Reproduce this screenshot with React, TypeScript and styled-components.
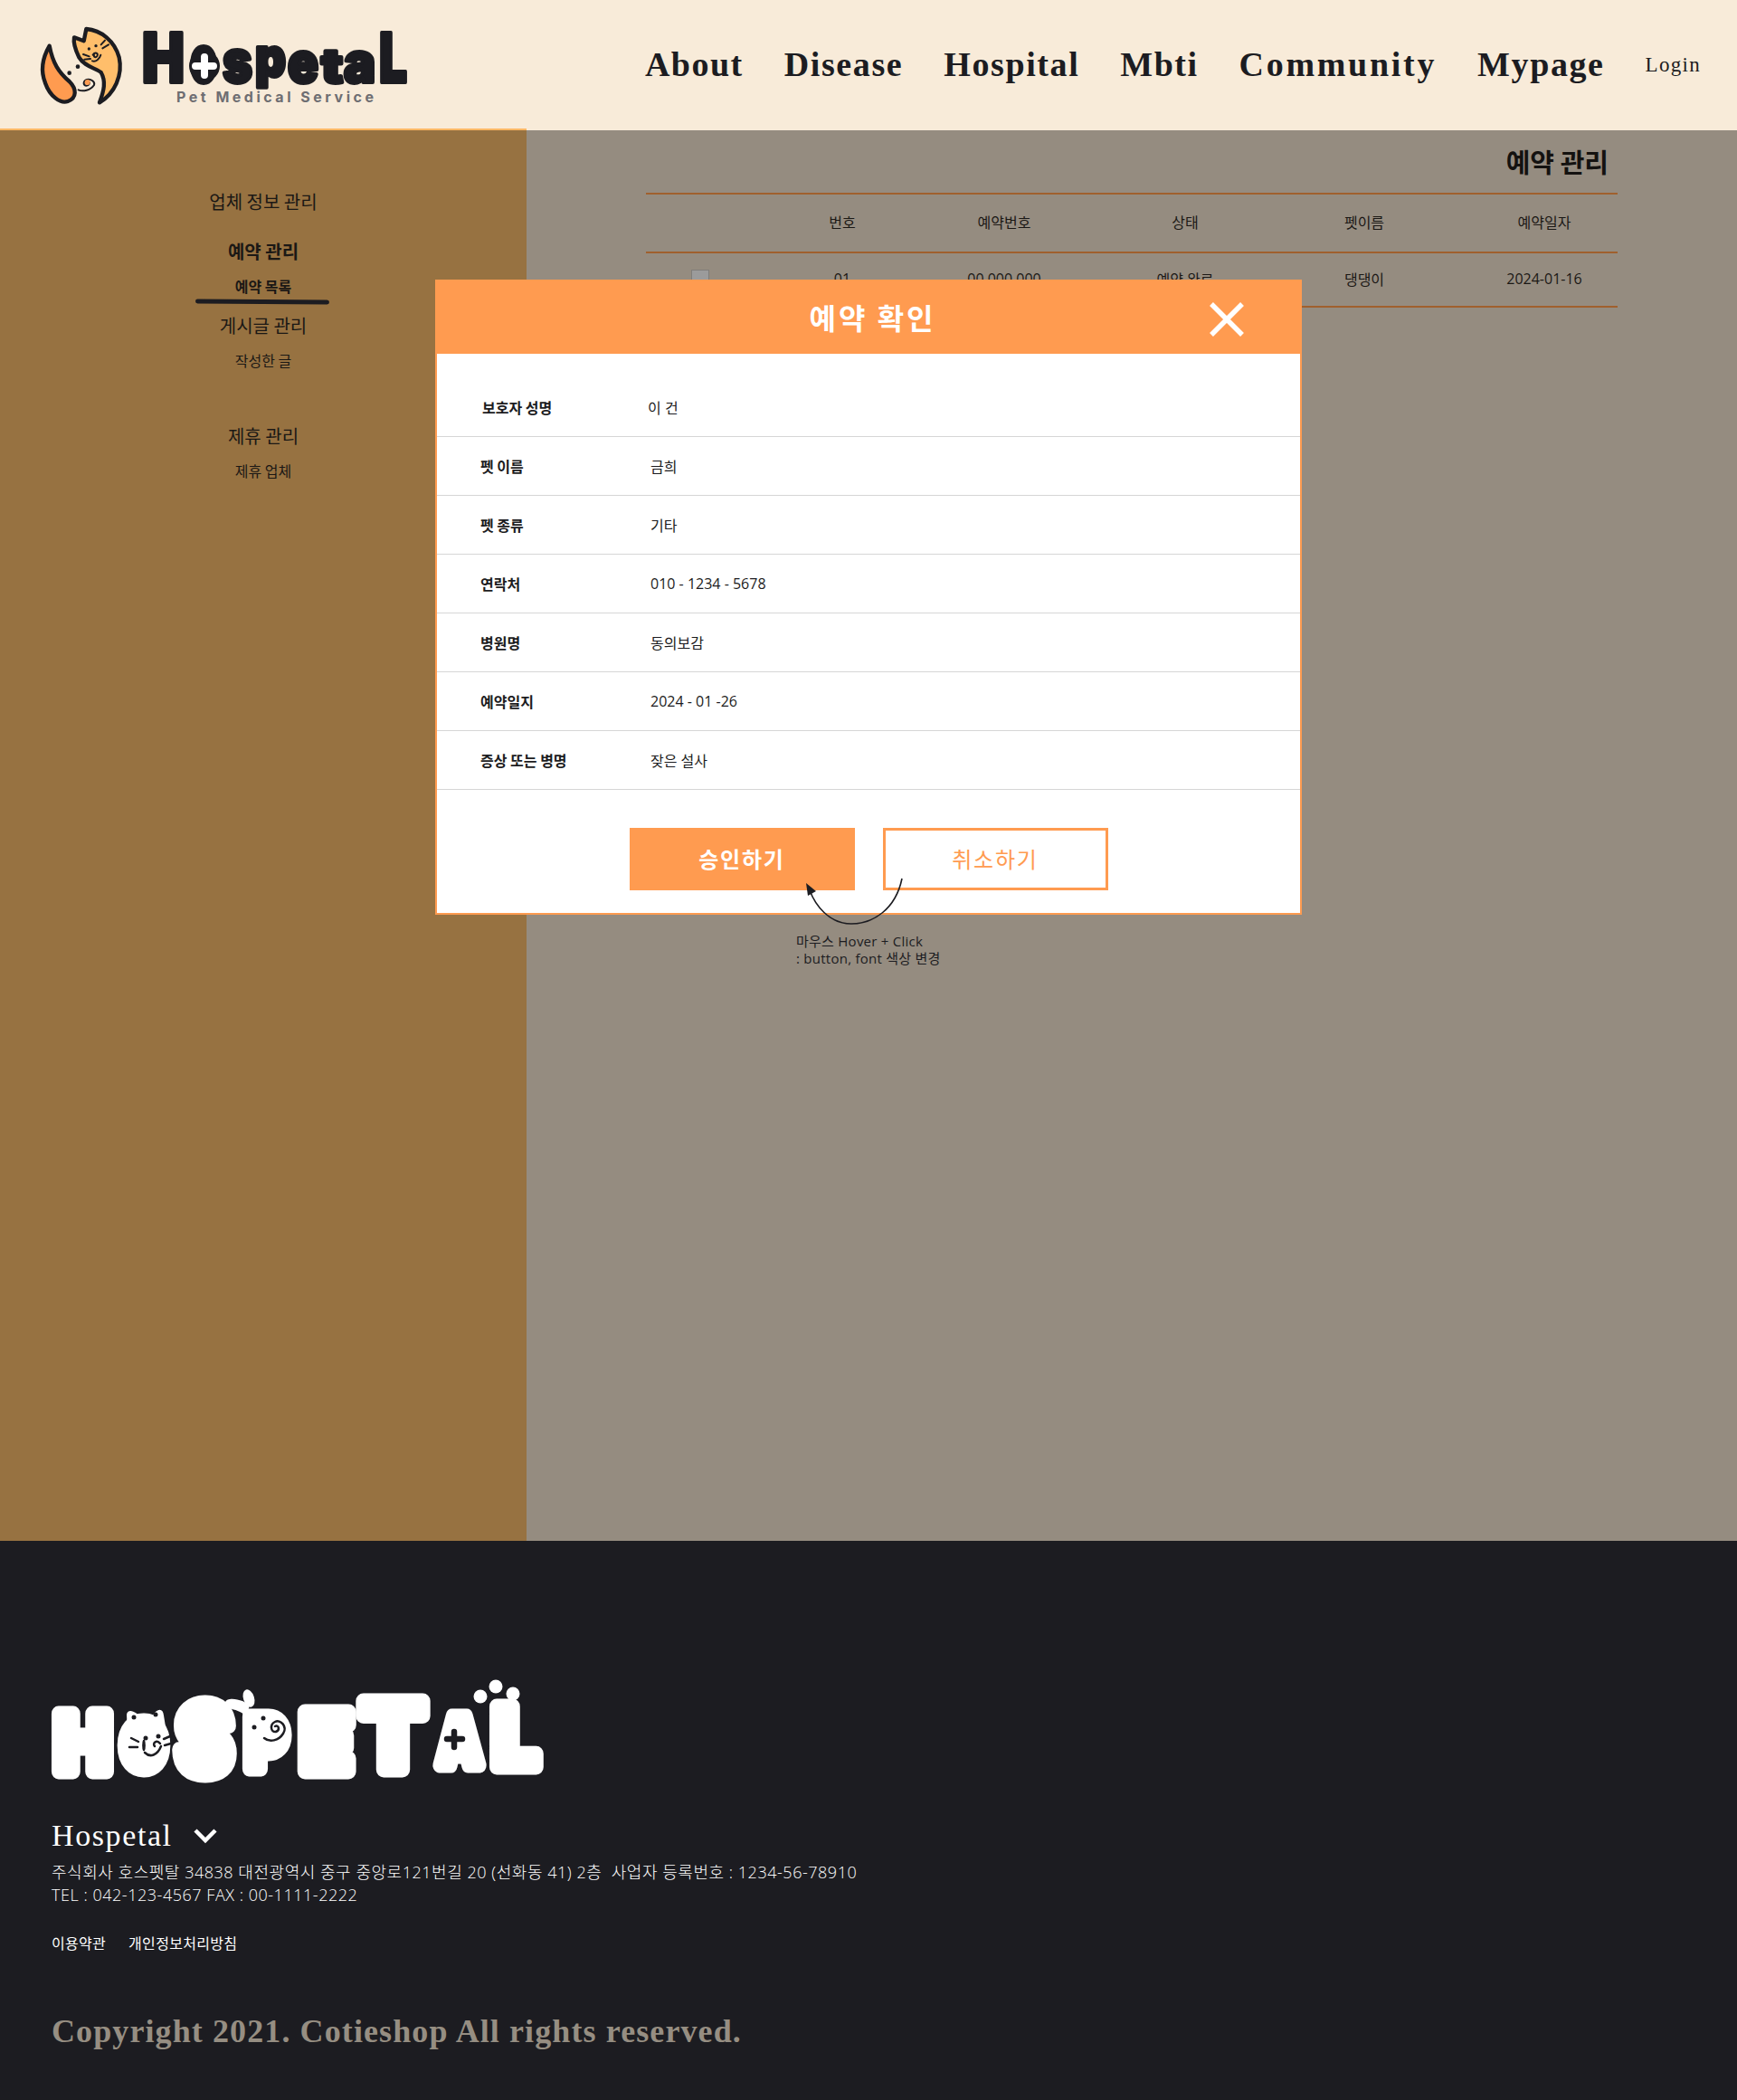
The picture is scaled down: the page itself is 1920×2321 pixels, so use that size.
import styled, { createGlobalStyle } from 'styled-components';

const GlobalStyle = createGlobalStyle`
  html, body {
    margin: 0;
    padding: 0;
  }
  * {
    box-sizing: border-box;
  }
  body {
    font-family: 'Open Sans', 'Noto Sans CJK KR', sans-serif;
    color: #1c1c21;
  }
`;

const NAV = [
  { label: 'About', tracking: 1.5 },
  { label: 'Disease', tracking: 1.6 },
  { label: 'Hospital', tracking: 1.6 },
  { label: 'Mbti', tracking: 1.5 },
  { label: 'Community', tracking: 2.7 },
  { label: 'Mypage', tracking: 1.6 },
];
const COLUMNS = ['번호', '예약번호', '상태', '펫이름', '예약일자'];
const DETAILS = [
  { label: '보호자 성명', value: '이 건', first: true },
  { label: '펫 이름', value: '금희' },
  { label: '펫 종류', value: '기타' },
  { label: '연락처', value: '010 - 1234 - 5678' },
  { label: '병원명', value: '동의보감' },
  { label: '예약일지', value: '2024 - 01 -26' },
  { label: '증상 또는 병명', value: '잦은 설사' },
];

// x, width, baseline, font size of every fat letter of the two logos
const HEADER_LETTERS = [
  { c: 'H', x: 157, w: 47, y: 90, s: 76 },
  { c: 'o', x: 210, w: 30, y: 90, s: 72 },
  { c: 's', x: 246, w: 33, y: 90, s: 66 },
  { c: 'p', x: 282, w: 34, y: 84, s: 60 },
  { c: 'e', x: 318, w: 34, y: 90, s: 62 },
  { c: 't', x: 355, w: 24, y: 90, s: 52 },
  { c: 'a', x: 380, w: 35, y: 90, s: 62 },
  { c: 'L', x: 419, w: 31, y: 90, s: 76 },
];

const FOOTER_LETTERS = [
  { c: 'H', x: 61, w: 61, y: 1956, s: 88 },
  { c: 'O', x: 135, w: 48, y: 1953, s: 71 },
  { c: 'S', x: 195, w: 62, y: 1959, s: 107 },
  { c: 'P', x: 272, w: 45, y: 1953, s: 80 },
  { c: 'E', x: 333, w: 56, y: 1956, s: 91 },
  { c: 'T', x: 399, w: 71, y: 1954, s: 104 },
  { c: 'A', x: 484, w: 48, y: 1949, s: 74 },
  { c: 'L', x: 545, w: 50, y: 1951, s: 92 },
];

const HeaderMark = () => (
  <MarkSvg viewBox="0 0 360 300" width="120" height="100">
    <path
      d="M74 92 C52 130 42 170 60 215 C75 258 110 285 135 276 C165 265 165 235 140 210 C105 180 85 150 74 92 Z"
      fill="#ff9b50"
      stroke="#1c1c21"
      strokeWidth="13"
      strokeLinejoin="round"
    />
    <path
      d="M156 64 L188 76 L196 36 C245 40 290 75 305 130 C318 190 290 250 240 280 C255 240 262 210 245 180 C225 165 190 160 172 130 C160 105 152 85 156 64 Z"
      fill="#ffbe6b"
      stroke="#1c1c21"
      strokeWidth="13"
      strokeLinejoin="round"
    />
    <g fill="#1c1c21">
      <circle cx="140" cy="182" r="7" />
      <circle cx="168" cy="161" r="7" />
      <circle cx="205" cy="102" r="5" />
      <circle cx="228" cy="92" r="5" />
    </g>
    <g fill="none" stroke="#1c1c21" strokeWidth="6" strokeLinecap="round">
      <path d="M186 120 L206 127 M190 137 L210 135" />
      <path d="M245 88 L258 74 M250 100 L270 88" />
      <path d="M218 122 C225 112 238 115 232 126 C228 132 220 130 222 122 M216 142 C228 146 240 136 244 122" />
      <path d="M170 238 C185 244 210 240 222 222 C226 212 212 200 198 204 C186 208 184 222 196 224 C206 224 210 214 202 210" />
    </g>
    <circle cx="200" cy="213" r="9" fill="#ff9b50" />
  </MarkSvg>
);

const HeaderWordmark = () => (
  <WordmarkSvg viewBox="150 25 310 75" width="310" height="75">
    <g fill="#1c1c21" stroke="#1c1c21" strokeWidth="4" strokeLinejoin="round">
      {HEADER_LETTERS.map((l) => (
        <text
          key={l.c}
          x={l.x}
          y={l.y}
          fontSize={l.s}
          textLength={l.w}
          lengthAdjust="spacingAndGlyphs"
        >
          {l.c}
        </text>
      ))}
    </g>
    <circle cx="226" cy="72" r="17" fill="#1c1c21" />
    <path
      d="M226 62 L226 82 M216 72 L236 72"
      stroke="#fff"
      strokeWidth="8"
      strokeLinecap="round"
    />
  </WordmarkSvg>
);

const FooterLogo = () => (
  <FooterLogoSvg viewBox="50 1850 560 125" width="560" height="125">
    <g fill="#fff" stroke="#fff" strokeWidth="17" strokeLinejoin="round">
      {FOOTER_LETTERS.map((l) => (
        <text
          key={l.c}
          x={l.x}
          y={l.y}
          fontSize={l.s}
          textLength={l.w}
          lengthAdjust="spacingAndGlyphs"
        >
          {l.c}
        </text>
      ))}
    </g>
    {/* cat ears */}
    <path d="M141 1915 L140 1893 C141 1886 150 1888 158 1899 L166 1899 C172 1886 180 1884 181 1894 L186 1925 Z" fill="#fff" />
    <g fill="#1c1c21">
      <circle cx="148" cy="1896" r="2.5" />
      <circle cx="172" cy="1893" r="2.5" />
      <circle cx="161" cy="1919" r="2.5" />
      <circle cx="175" cy="1917" r="2.5" />
      <circle cx="281" cy="1907" r="2.5" />
      <circle cx="291" cy="1897" r="2.5" />
    </g>
    <g fill="none" stroke="#1c1c21" strokeWidth="2.5" strokeLinecap="round">
      <path d="M145 1919 L153 1923 M143 1929 L152 1929" />
      <path d="M177 1925 C173 1920 168 1925 171 1928 M160 1935 C166 1941 174 1938 178 1928" />
      <path d="M181 1920 L188 1917 M182 1927 L189 1925" />
      <path d="M292 1919 C298 1924 308 1922 313 1914 C318 1906 310 1898 304 1901 C298 1904 299 1913 305 1912 C310 1910 308 1904 304 1906" />
    </g>
    <path d="M276 1883 C272 1878 253 1872 249 1879 C246 1889 262 1884 272 1895 Z" fill="#fff" />
    <ellipse cx="275" cy="1875" rx="6" ry="10" transform="rotate(-18 275 1875)" fill="#fff" />
    <circle cx="531" cy="1873" r="7.5" fill="#fff" />
    <circle cx="548" cy="1862" r="7.5" fill="#fff" />
    <circle cx="567" cy="1870" r="7.5" fill="#fff" />
    <path d="M502 1912 L502 1929 M494 1920 L511 1920" stroke="#1c1c21" strokeWidth="6.5" strokeLinecap="round" />
  </FooterLogoSvg>
);

const App = () => {
  return (
    <>
      <GlobalStyle />
      <Page>
        <Header>
          <LogoWrap>
            <HeaderMark />
            <HeaderWordmark />
            <LogoSub>Pet Medical Service</LogoSub>
          </LogoWrap>
          <Nav>
            {NAV.map((item) => (
              <NavLink key={item.label} $tracking={item.tracking}>
                {item.label}
              </NavLink>
            ))}
            <LoginLink>Login</LoginLink>
          </Nav>
          <HeaderAccent />
        </Header>

        <Body>
          <Sidebar>
            <MenuTitle>업체 정보 관리</MenuTitle>
            <MenuTitle $active $gap={25}>
              예약 관리
            </MenuTitle>
            <SubItem $active>예약 목록</SubItem>
            <MenuTitle $gap={17}>게시글 관리</MenuTitle>
            <SubItem>작성한 글</SubItem>
            <MenuTitle $gap={57}>제휴 관리</MenuTitle>
            <SubItem>제휴 업체</SubItem>
          </Sidebar>

          <Main>
            <PageTitle>예약 관리</PageTitle>
            <TableHead>
              <span />
              {COLUMNS.map((col) => (
                <Cell key={col}>{col}</Cell>
              ))}
            </TableHead>
            <TableRow>
              <Cell>
                <CheckBox />
              </Cell>
              <Cell>01</Cell>
              <Cell>00 000 000</Cell>
              <Cell>예약 완료</Cell>
              <Cell>댕댕이</Cell>
              <Cell>2024-01-16</Cell>
            </TableRow>
          </Main>

          <Modal>
            <ModalHeader>
              <ModalTitle>예약 확인</ModalTitle>
              <CloseIcon viewBox="0 0 38 38" width="38" height="38">
                <path d="M2 2 L36 36 M36 2 L2 36" stroke="#fff" strokeWidth="5.5" />
              </CloseIcon>
            </ModalHeader>
            <DetailList>
              {DETAILS.map((row) => (
                <DetailRow key={row.label} $first={row.first}>
                  <DetailLabel>{row.label}</DetailLabel>
                  <DetailValue>{row.value}</DetailValue>
                </DetailRow>
              ))}
            </DetailList>
            <Actions>
              <ActionButton $primary>승인하기</ActionButton>
              <ActionButton>취소하기</ActionButton>
            </Actions>
            <ArrowSvg viewBox="880 965 130 65" width="130" height="65">
              <path
                d="M997 971 C990 1005 965 1021 941 1021 C916 1021 901 1000 895 984"
                fill="none"
                stroke="#1c1c21"
                strokeWidth="1.6"
              />
              <path d="M891 976 L902 985 L893 990 Z" fill="#1c1c21" />
            </ArrowSvg>
            <Annotation>
              마우스 Hover + Click
              <br />: button, font 색상 변경
            </Annotation>
          </Modal>
        </Body>

        <Footer>
          <FooterLogo />
          <FooterBrand>
            Hospetal
            <svg viewBox="0 0 28 18" width="28" height="18">
              <path d="M3 3 L14 14 L25 3" fill="none" stroke="#fff" strokeWidth="4.5" />
            </svg>
          </FooterBrand>
          <FooterAddress $first>
            주식회사 호스펫탈 34838 대전광역시 중구 중앙로121번길 20 (선화동 41) 2층&nbsp;&nbsp;사업자 등록번호 : 1234-56-78910
          </FooterAddress>
          <FooterAddress>TEL : 042-123-4567 FAX : 00-1111-2222</FooterAddress>
          <FooterLinks>
            <span>이용약관</span>
            <span>개인정보처리방침</span>
          </FooterLinks>
          <Copyright>Copyright 2021. Cotieshop All rights reserved.</Copyright>
        </Footer>
      </Page>
    </>
  );
};

const Page = styled.div`
  width: 1920px;
  height: 2321px;
  display: flex;
  flex-direction: column;
  overflow: hidden;
`;

const Header = styled.header`
  position: relative;
  height: 144px;
  flex: none;
  display: flex;
  align-items: center;
  justify-content: space-between;
  padding: 0 40px 0 30px;
  background-color: #f8ebd9;
`;

const HeaderAccent = styled.div`
  position: absolute;
  left: 0;
  bottom: 0;
  width: 582px;
  height: 2px;
  background-color: #ffb866;
`;

const LogoWrap = styled.div`
  position: relative;
  width: 430px;
  height: 100px;
  margin-top: -4px;
`;

const MarkSvg = styled.svg`
  display: block;
`;

const WordmarkSvg = styled.svg`
  position: absolute;
  left: 120px;
  top: 6px;
  font-family: 'Inter', sans-serif;
  font-weight: 900;
`;

const LogoSub = styled.div`
  position: absolute;
  left: 165px;
  top: 76px;
  font-family: 'Inter', sans-serif;
  font-size: 16px;
  line-height: 22px;
  font-weight: 700;
  letter-spacing: 3.5px;
  white-space: nowrap;
  color: #6e6e72;
`;

const Nav = styled.nav`
  display: flex;
  align-items: center;
  gap: 45px;
  margin-top: -2px;
`;

const NavLink = styled.a<{ $tracking: number }>`
  font-family: 'Liberation Serif', serif;
  font-size: 38px;
  font-weight: 700;
  letter-spacing: ${({ $tracking }) => $tracking}px;
  color: #1c1c21;
`;

const LoginLink = styled.a`
  font-family: 'Liberation Serif', serif;
  font-size: 23px;
  letter-spacing: 1.3px;
  margin-top: 2px;
  color: #1c1c21;
`;

const Body = styled.div`
  position: relative;
  height: 1559px;
  flex: none;
  display: flex;
`;

const Sidebar = styled.aside`
  width: 582px;
  flex: none;
  display: flex;
  flex-direction: column;
  align-items: center;
  padding-top: 64px;
  background-color: #977241;
`;

const MenuTitle = styled.div<{ $active?: boolean; $gap?: number }>`
  margin-top: ${({ $gap }) => $gap ?? 0}px;
  font-family: 'Noto Sans CJK KR', sans-serif;
  font-size: 20px;
  line-height: 30px;
  font-weight: ${({ $active }) => ($active ? 700 : 400)};
  color: #1b1815;
`;

const SubItem = styled.div<{ $active?: boolean }>`
  position: relative;
  margin-top: 11px;
  font-family: 'Noto Sans CJK KR', sans-serif;
  font-size: 16px;
  line-height: 24px;
  font-weight: ${({ $active }) => ($active ? 700 : 400)};
  color: #1b1815;

  ${({ $active }) =>
    $active &&
    `&::after {
      content: '';
      position: absolute;
      left: -44px;
      top: 27px;
      width: 148px;
      height: 5px;
      border-radius: 3px;
      background-color: #1c1c21;
      transform: rotate(0.4deg);
    }`}
`;

const Main = styled.main`
  flex: 1;
  padding: 15px 132px 0 132px;
  background-color: #958c80;
`;

const PageTitle = styled.h1`
  margin: 0 10px 16px 0;
  font-family: 'Noto Sans CJK KR', sans-serif;
  font-size: 29px;
  line-height: 38px;
  font-weight: 700;
  text-align: right;
  color: #141210;
`;

const TableHead = styled.div`
  display: grid;
  grid-template-columns: 138px 158px 200px 200px 196px 182px;
  align-items: center;
  height: 67px;
  padding-bottom: 3px;
  border-top: 2px solid #a0602e;
  border-bottom: 2px solid #a0602e;
  & > div:last-child {
    padding-left: 20px;
  }
`;

const TableRow = styled(TableHead)`
  height: 60px;
  padding-bottom: 2px;
  border-top: none;
`;

const Cell = styled.div`
  display: flex;
  justify-content: center;
  font-size: 16px;
  color: #1b1815;
  &:first-child {
    padding-right: 18px;
  }
`;

const CheckBox = styled.div`
  width: 20px;
  height: 20px;
  background-color: #9b9b9b;
  border: 1px solid #7f7d7a;
`;

const Modal = styled.div`
  position: absolute;
  left: 481px;
  top: 165px;
  width: 958px;
  display: flex;
  flex-direction: column;
  border: 2px solid #ff9b50;
  background-color: #fff;
`;

const ModalHeader = styled.div`
  position: relative;
  height: 80px;
  display: flex;
  align-items: center;
  justify-content: center;
  background-color: #ff9b50;
`;

const ModalTitle = styled.h2`
  margin: -2px 0 0 9px;
  font-family: 'Noto Sans CJK KR', sans-serif;
  font-size: 32px;
  font-weight: 700;
  letter-spacing: 3px;
  color: #fff;
`;

const CloseIcon = styled.svg`
  position: absolute;
  left: 854px;
  top: 23px;
`;

const DetailList = styled.div`
  padding-top: 27px;
`;

const DetailRow = styled.div<{ $first?: boolean }>`
  height: 65px;
  display: grid;
  grid-template-columns: ${({ $first }) => ($first ? '183px' : '188px')} 1fr;
  align-items: center;
  padding-left: ${({ $first }) => ($first ? '50px' : '48px')};
  padding-bottom: 1px;
  border-bottom: 1px solid #d6d6d6;
`;

const DetailLabel = styled.div`
  font-family: 'Noto Sans CJK KR', sans-serif;
  font-size: 16px;
  font-weight: 700;
  color: #1c1c21;
`;

const DetailValue = styled.div`
  font-size: 16px;
  color: #1c1c21;
`;

const Actions = styled.div`
  display: flex;
  justify-content: center;
  gap: 31px;
  padding: 42px 0 25px;
`;

const ActionButton = styled.button<{ $primary?: boolean }>`
  width: 249px;
  height: 69px;
  padding: 0 0 2px;
  border: 3px solid #ff9b50;
  border-radius: 0;
  background-color: ${({ $primary }) => ($primary ? '#ff9b50' : '#fff')};
  font-family: 'Noto Sans CJK KR', sans-serif;
  font-size: 24px;
  font-weight: ${({ $primary }) => ($primary ? 700 : 400)};
  letter-spacing: 1.8px;
  color: ${({ $primary }) => ($primary ? '#fff' : '#ff9b50')};
`;

const ArrowSvg = styled.svg`
  position: absolute;
  left: 397px;
  top: 654px;
`;

const Annotation = styled.div`
  position: absolute;
  left: 397px;
  top: 720px;
  font-size: 15px;
  line-height: 19px;
  letter-spacing: 0.25px;
  white-space: nowrap;
  color: #1c1c21;
`;

const Footer = styled.footer`
  flex: 1;
  padding: 149px 0 0 57px;
  background-color: #1c1c21;
  color: #fff;
`;

const FooterLogoSvg = styled.svg`
  display: block;
  margin-left: -7px;
  font-family: 'Inter', sans-serif;
  font-weight: 900;
`;

const FooterBrand = styled.div`
  display: flex;
  align-items: center;
  gap: 22px;
  margin-top: 32px;
  font-family: 'Liberation Serif', serif;
  font-size: 34px;
  letter-spacing: 1.6px;
  line-height: 40px;
`;

const FooterAddress = styled.div<{ $first?: boolean }>`
  margin-top: ${({ $first }) => ($first ? '8px' : '0')};
  font-size: 18px;
  font-weight: 300;
  letter-spacing: 0.53px;
  line-height: 25px;
  white-space: nowrap;
`;

const FooterLinks = styled.div`
  display: flex;
  gap: 25px;
  margin-top: 28px;
  font-family: 'Noto Sans CJK KR', sans-serif;
  font-size: 16px;
  line-height: 24px;
  letter-spacing: 0.3px;
`;

const Copyright = styled.div`
  margin-top: 65px;
  font-family: 'Liberation Serif', serif;
  font-size: 36px;
  line-height: 42px;
  font-weight: 700;
  letter-spacing: 1.1px;
  color: #968e82;
`;

export default App;
